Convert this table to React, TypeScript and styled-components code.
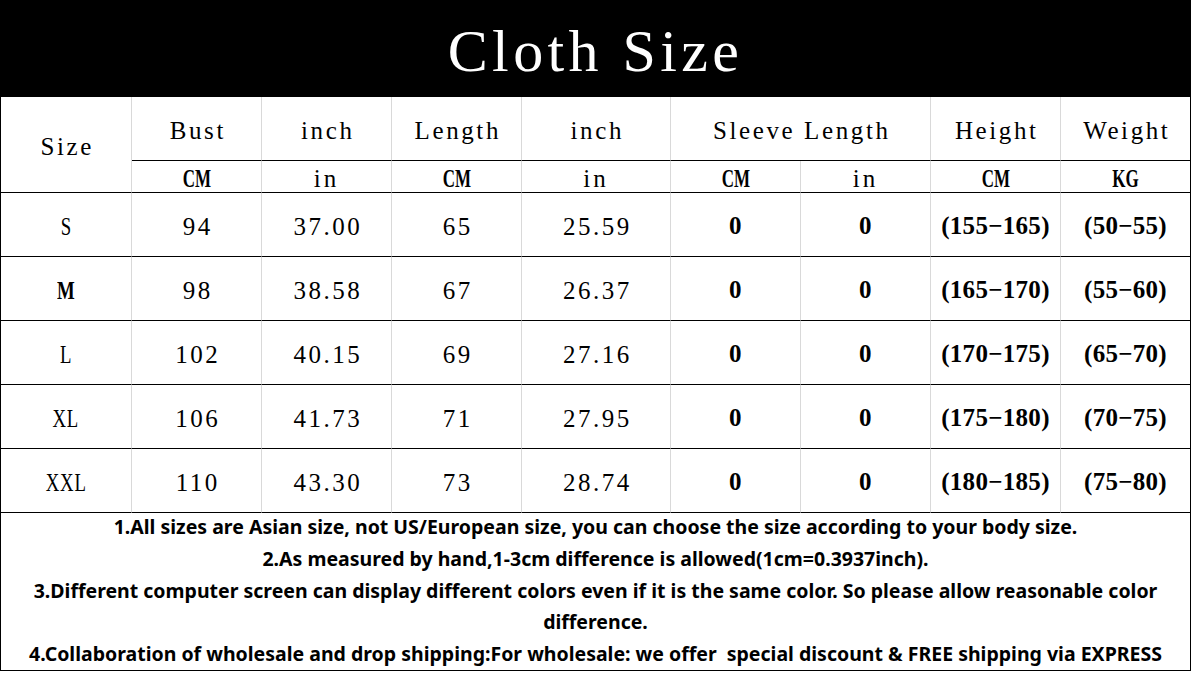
import styled, { createGlobalStyle } from 'styled-components';

const GlobalStyle = createGlobalStyle`
  html, body {
    margin: 0;
    padding: 0;
    background: #fff;
  }
  * {
    box-sizing: border-box;
  }
`;

const Page = styled.div`
  width: 1191px;
  height: 673px;
  overflow: hidden;
  background: #fff;
  color: #000;
`;

const Banner = styled.h1`
  margin: 0;
  height: 97px;
  background: #000;
  color: #fff;
  display: flex;
  align-items: center;
  justify-content: center;
  padding-top: 6px;
  font-family: 'Liberation Serif', serif;
  font-weight: 400;
  font-size: 60px;
  letter-spacing: 4.4px;
`;

const Table = styled.div`
  display: grid;
  grid-template-columns: 131px 130px 130px 130px 149px 130px 130px 130px 1fr;
  grid-template-rows: 64px 32px repeat(5, 64px);
  border-left: 1px solid #000;
  border-right: 1px solid #000;
`;

const Cell = styled.div<{ $span?: number; $rows?: number; $last?: boolean }>`
  grid-column: span ${(p) => p.$span ?? 1};
  grid-row: span ${(p) => p.$rows ?? 1};
  display: flex;
  align-items: center;
  justify-content: center;
  border-bottom: 1px solid #000;
  border-right: ${(p) => (p.$last ? 'none' : '1px solid #d9d9d9')};
  font-family: 'Liberation Serif', serif;
  font-size: 25px;
  white-space: nowrap;
`;

const HeadText = styled.span`
  letter-spacing: 2.6px;
  padding-left: 2.6px;
  padding-top: 4px;
`;

const UnitText = styled.span<{ $bold?: boolean }>`
  display: inline-block;
  font-size: 25px;
  font-weight: ${(p) => (p.$bold ? 700 : 400)};
  letter-spacing: ${(p) => (p.$bold ? '0' : '3px')};
  transform: ${(p) => (p.$bold ? 'scaleX(0.68)' : 'none')};
  padding-top: 4px;
`;

const SizeLabel = styled.span<{ $bold?: boolean }>`
  display: inline-block;
  font-weight: ${(p) => (p.$bold ? 700 : 400)};
  transform: scaleX(0.75);
  letter-spacing: 1px;
  padding-top: 5px;
`;

const Num = styled.span`
  letter-spacing: 2.5px;
  padding-left: 2.5px;
  padding-top: 5px;
`;

const Range = styled.span`
  font-weight: 700;
  letter-spacing: 0.3px;
  padding-top: 3px;
`;

const Notes = styled.div`
  border-left: 1px solid #000;
  border-right: 1px solid #000;
  border-bottom: 1px solid #000;
  padding: 0 8px;
  margin-top: -2px;
  font-family: 'Noto Sans', 'Open Sans', sans-serif;
  font-weight: 700;
  font-size: 19.5px;
  line-height: 31.8px;
  text-align: center;
`;

const Note = styled.p`
  margin: 0;
  white-space: nowrap;
`;

type Row = {
  size: string;
  bust: string;
  bustIn: string;
  length: string;
  lengthIn: string;
  height: string;
  weight: string;
};

const rows: Row[] = [
  { size: 'S', bust: '94', bustIn: '37.00', length: '65', lengthIn: '25.59', height: '(155−165)', weight: '(50−55)' },
  { size: 'M', bust: '98', bustIn: '38.58', length: '67', lengthIn: '26.37', height: '(165−170)', weight: '(55−60)' },
  { size: 'L', bust: '102', bustIn: '40.15', length: '69', lengthIn: '27.16', height: '(170−175)', weight: '(65−70)' },
  { size: 'XL', bust: '106', bustIn: '41.73', length: '71', lengthIn: '27.95', height: '(175−180)', weight: '(70−75)' },
  { size: 'XXL', bust: '110', bustIn: '43.30', length: '73', lengthIn: '28.74', height: '(180−185)', weight: '(75−80)' },
];

const headers: { label: string; span?: number; last?: boolean }[] = [
  { label: 'Bust' },
  { label: 'inch' },
  { label: 'Length' },
  { label: 'inch' },
  { label: 'Sleeve Length', span: 2 },
  { label: 'Height' },
  { label: 'Weight', last: true },
];

const units: { label: string; bold: boolean }[] = [
  { label: 'CM', bold: true },
  { label: 'in', bold: false },
  { label: 'CM', bold: true },
  { label: 'in', bold: false },
  { label: 'CM', bold: true },
  { label: 'in', bold: false },
  { label: 'CM', bold: true },
  { label: 'KG', bold: true },
];

const App = () => {
  return (
    <Page>
      <GlobalStyle />
      <Banner>Cloth Size</Banner>
      <Table>
        <Cell $rows={2}>
          <HeadText>Size</HeadText>
        </Cell>
        {headers.map((h, i) => (
          <Cell key={'h' + i} $span={h.span} $last={h.last}>
            <HeadText>{h.label}</HeadText>
          </Cell>
        ))}
        {units.map((u, i) => (
          <Cell key={'u' + i} $last={i === units.length - 1}>
            <UnitText $bold={u.bold}>{u.label}</UnitText>
          </Cell>
        ))}
        {rows.flatMap((r) => [
          <Cell key={r.size + 's'}>
            <SizeLabel $bold={r.size === 'M'}>{r.size}</SizeLabel>
          </Cell>,
          <Cell key={r.size + 'b'}><Num>{r.bust}</Num></Cell>,
          <Cell key={r.size + 'bi'}><Num>{r.bustIn}</Num></Cell>,
          <Cell key={r.size + 'l'}><Num>{r.length}</Num></Cell>,
          <Cell key={r.size + 'li'}><Num>{r.lengthIn}</Num></Cell>,
          <Cell key={r.size + 'sc'}><Range>0</Range></Cell>,
          <Cell key={r.size + 'si'}><Range>0</Range></Cell>,
          <Cell key={r.size + 'h'}><Range>{r.height}</Range></Cell>,
          <Cell key={r.size + 'w'} $last><Range>{r.weight}</Range></Cell>,
        ])}
      </Table>
      <Notes>
        <Note>1.All sizes are Asian size, not US/European size, you can choose the size according to your body size.</Note>
        <Note>2.As measured by hand,1-3cm difference is allowed(1cm=0.3937inch).</Note>
        <Note>3.Different computer screen can display different colors even if it is the same color. So please allow reasonable color</Note>
        <Note>difference.</Note>
        <Note>4.Collaboration of wholesale and drop shipping:For wholesale: we offer&nbsp; special discount &amp; FREE shipping via EXPRESS</Note>
      </Notes>
    </Page>
  );
};

export default App;
